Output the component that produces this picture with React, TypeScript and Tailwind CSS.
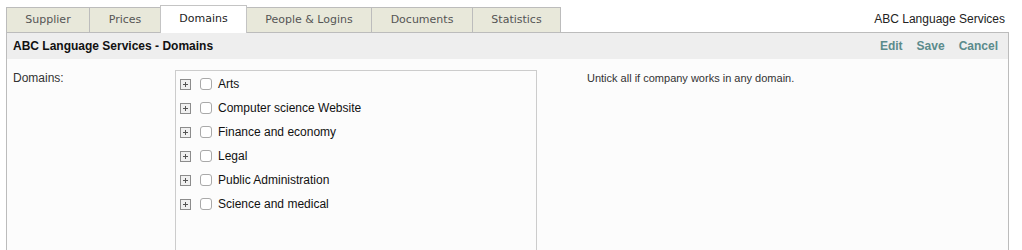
import React from 'react';

const tabs = [
  { label: 'Supplier', w: 'w-[84px]' },
  { label: 'Prices', w: 'w-[72px]' },
  { label: 'Domains', w: 'w-[87px]' },
  { label: 'People & Logins', w: 'w-[126px]' },
  { label: 'Documents', w: 'w-[102px]' },
  { label: 'Statistics', w: 'w-[89px]' },
];
const domains = [
  'Arts',
  'Computer science Website',
  'Finance and economy',
  'Legal',
  'Public Administration',
  'Science and medical',
];

function PlusBox() {
  return (
    <svg width="11" height="11" viewBox="0 0 11 11" className="shrink-0">
      <rect x="0.5" y="0.5" width="10" height="10" fill="#f0f0f0" stroke="#8c8c8c" />
      <path d="M3 5.5h5M5.5 3v5" stroke="#555" strokeWidth="1" />
    </svg>
  );
}

export default function App() {
  const active = 'Domains';
  return (
    <div className="w-[1022px] h-[250px] overflow-hidden bg-white font-['Liberation_Sans',Arial,sans-serif]">
      {/* tab strip */}
      <div className="flex items-end justify-between pl-[6px] pr-[17px] h-[32px]">
        <div className="flex items-end">
          {tabs.map((t, i) => (
            <div
              key={t.label}
              className={
                (t.label === active
                  ? 'h-[28px] bg-white border-[#c4c4c4] text-[#222] relative z-10 -mb-px pb-px '
                  : 'h-[25px] bg-[#e8e8da] border-[#bcbcbc] text-[#555] ') +
                (i > 0 ? '-ml-px ' : '') +
                t.w +
                " flex items-center justify-center border border-b-0 text-[11px] font-['DejaVu_Sans',Verdana,sans-serif]"
              }
            >
              {t.label}
            </div>
          ))}
        </div>
        <div className="text-[12px] text-[#222] pb-[4px]">ABC Language Services</div>
      </div>

      {/* panel */}
      <div className="ml-[6px] w-[1003px] border border-[#bcbcbc] border-b-0 h-[230px] bg-[#fcfcfc]">
        <div className="h-[26px] bg-[#eeeeee] flex items-center justify-between pl-[6px] pr-[10px] text-[12px] font-bold">
          <span className="text-[#111]">ABC Language Services - Domains</span>
          <div className="flex gap-[14px] text-[#5b8b8c]">
            <span>Edit</span>
            <span>Save</span>
            <span>Cancel</span>
          </div>
        </div>
        <div className="flex pt-[12px]">
          <div className="w-[168px] pl-[6px] text-[12px] text-[#333] leading-[14px]">Domains:</div>
          <div className="w-[362px] h-[200px] border border-[#cccccc] border-b-0 bg-[#fcfcfc] -mt-[1px] pt-px">
            {domains.map((d) => (
              <div key={d} className="flex items-center h-[24px] pl-[4px]">
                <PlusBox />
                <span className="ml-[9px] w-[12px] h-[12px] rounded-[3px] border border-[#a9a9a9] bg-white shrink-0" />
                <span className="ml-[6px] text-[12px] text-[#111]">{d}</span>
              </div>
            ))}
          </div>
          <div className="pl-[50px] text-[11px] text-[#333] leading-[14px]">
            Untick all if company works in any domain.
          </div>
        </div>
      </div>
    </div>
  );
}
